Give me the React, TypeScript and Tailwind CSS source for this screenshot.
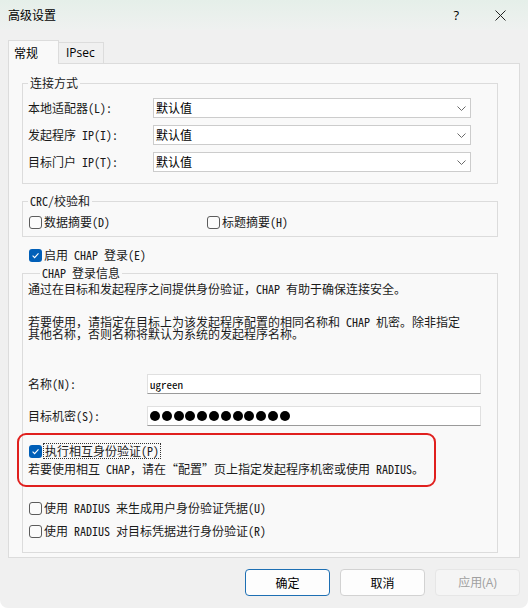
import React from "react";

const body = "font-['Noto_Sans_Mono_CJK_SC','Noto_Sans_CJK_SC',monospace]";
const ui = "font-['Segoe_UI','Open_Sans','Noto_Sans_CJK_SC',sans-serif]";

function Box({ checked }: { checked?: boolean }) {
  return checked ? (
    <span className="w-[13px] h-[13px] rounded-[3px] bg-[#005fb8] flex items-center justify-center shrink-0">
      <svg width="9" height="9" viewBox="0 0 9 9">
        <path d="M1.6 4.7 L3.6 6.6 L7.5 2.4" fill="none" stroke="white" strokeWidth="1.1" />
      </svg>
    </span>
  ) : (
    <span className="w-[13px] h-[13px] rounded-[3px] border border-[#5c5c5c] bg-[#fbfbfb] shrink-0" />
  );
}

function Combo() {
  return (
    <div className="w-[318px] h-[20px] bg-white border border-[#cccccc] flex items-center pl-[2px] pr-[4px] justify-between">
      <span className="text-[12px] leading-[14px] text-black font-['Noto_Sans_CJK_SC',sans-serif]">默认值</span>
      <svg width="9" height="5" viewBox="0 0 9 5">
        <path d="M0.5 0.5 L4.5 4.5 L8.5 0.5" fill="none" stroke="#6a6a6a" strokeWidth="1" />
      </svg>
    </div>
  );
}

function Legend({ children, ml }: { children: React.ReactNode; ml: string }) {
  return (
    <div className={`-mt-[9px] ${ml} px-[2px] w-fit bg-[#f9f9f9] leading-[16px] text-[12px] text-[#1a1a1a]`}>
      {children}
    </div>
  );
}

function ComboRow({ label }: { label: string }) {
  return (
    <div className="flex items-center h-[20px] pl-[5px]">
      <span className="w-[125px] text-[12px] leading-[14px] text-[#1a1a1a]">{label}</span>
      <Combo />
    </div>
  );
}

function CheckRow({ checked, label, cls }: { checked?: boolean; label: React.ReactNode; cls?: string }) {
  return (
    <div className={`flex items-center gap-[2px] h-[16px] ${cls ?? ""}`}>
      <Box checked={checked} />
      <span className="text-[12px] leading-[14px] text-[#1a1a1a] whitespace-nowrap">{label}</span>
    </div>
  );
}

export default function App() {
  return (
    <div className={`w-[528px] h-[608px] bg-[#f0f0f0] overflow-hidden rounded-b-[8px] ${body}`}>
      {/* title bar */}
      <div className="h-[30px] flex items-center pl-[8px] pr-[22px] bg-gradient-to-b from-[#e5efe9] to-[#eff1f0]">
        <span className="text-[12px] leading-[16px] text-black font-['Noto_Sans_CJK_SC',sans-serif]">高级设置</span>
        <span className={`ml-auto text-[13px] leading-[16px] text-black ${ui}`}>?</span>
        <svg className="ml-[36px]" width="11" height="11" viewBox="0 0 11 11">
          <path d="M0.5 0.5 L10.5 10.5 M10.5 0.5 L0.5 10.5" stroke="#222" strokeWidth="1" />
        </svg>
      </div>

      {/* tabs */}
      <div className="mt-[10px] h-[23px] flex items-end pl-[8px]">
        <div className="relative z-10 -mb-px w-[51px] h-[24px] border border-b-0 border-[#dcdcdc] bg-[#f9f9f9] pl-[5px] flex items-center">
          <span className="text-[12px] leading-[16px] text-black font-['Noto_Sans_CJK_SC',sans-serif]">常规</span>
        </div>
        <div className="w-[45px] h-[21px] border border-l-0 border-b-0 border-[#dcdcdc] bg-[#f0f0f0] pl-[7px] flex items-center">
          <span className={`text-[12px] leading-[16px] text-black ${ui}`}>IPsec</span>
        </div>
      </div>

      {/* panel */}
      <div className="mx-[8px] w-[512px] border border-[#dcdcdc] bg-[#f9f9f9] pb-[4px]">
        {/* group 1 */}
        <div className="mt-[19px] ml-[13px] w-[476px] border border-[#dcdcdc] pb-[11px]">
          <Legend ml="ml-[5px]">连接方式</Legend>
          <div className="mt-[7px] flex flex-col gap-[7px]">
            <ComboRow label="本地适配器(L):" />
            <ComboRow label="发起程序 IP(I):" />
            <ComboRow label="目标门户 IP(T):" />
          </div>
        </div>

        {/* group 2 */}
        <div className="mt-[17px] ml-[13px] w-[476px] border border-[#dcdcdc] pb-[6px]">
          <Legend ml="ml-[5px]">CRC/校验和</Legend>
          <div className="mt-[5px] pl-[6px] flex items-center">
            <div className="w-[178px]">
              <CheckRow label="数据摘要(D)" />
            </div>
            <CheckRow label="标题摘要(H)" />
          </div>
        </div>

        <CheckRow checked label="启用 CHAP 登录(E)" cls="mt-[10px] ml-[20px]" />

        {/* group 3 */}
        <div className="mt-[10px] ml-[13px] w-[476px] border border-[#dcdcdc] pb-[13px]">
          <Legend ml="ml-[17px]">CHAP 登录信息</Legend>
          <div className="mt-[1px] pl-[5px] text-[12px] leading-[14px] text-[#1a1a1a] whitespace-nowrap">
            通过在目标和发起程序之间提供身份验证，CHAP 有助于确保连接安全。
          </div>
          <div className="mt-[20px] pl-[5px] text-[12px] leading-[12px] text-[#1a1a1a] whitespace-nowrap">
            若要使用，请指定在目标上为该发起程序配置的相同名称和 CHAP 机密。除非指定
            <br />
            其他名称，否则名称将默认为系统的发起程序名称。
          </div>

          <div className="mt-[34px] flex items-center h-[20px] pl-[5px]">
            <span className="w-[119px] text-[12px] leading-[14px] text-[#1a1a1a]">名称(N):</span>
            <div className="w-[334px] h-[20px] bg-white border border-[#e0e0e0] border-b-[#9a9a9a] flex items-center pl-[2px]">
              <span className="text-[11px] leading-[14px] text-black">ugreen</span>
            </div>
          </div>
          <div className="mt-[12px] flex items-center h-[20px] pl-[5px]">
            <span className="w-[119px] text-[12px] leading-[14px] text-[#1a1a1a]">目标机密(S):</span>
            <div className="w-[334px] h-[20px] bg-white border border-[#e0e0e0] border-b-[#9a9a9a] flex items-center pl-[2px] gap-[1.8px]">
              {Array.from({ length: 12 }).map((_, i) => (
                <span key={i} className="w-[10px] h-[10px] rounded-full bg-black" />
              ))}
            </div>
          </div>

          <div className="relative mt-[17px]">
            <div className="flex items-center gap-[1px] h-[16px] pl-[6px]">
              <Box checked />
              <span className="text-[12px] leading-[14px] text-[#1a1a1a] border border-dotted border-[#333] px-[1px] whitespace-nowrap">
                执行相互身份验证(P)
              </span>
            </div>
            <div className="mt-[3px] pl-[5px] text-[12px] leading-[14px] text-[#1a1a1a] whitespace-nowrap">
              若要使用相互 CHAP，请在“配置”页上指定发起程序机密或使用 RADIUS。
            </div>
            <div className="absolute -top-[10px] -left-[6px] w-[419px] h-[54px] border-[2.5px] border-[#e0201e] rounded-[9px] pointer-events-none" />
          </div>

          <CheckRow label="使用 RADIUS 来生成用户身份验证凭据(U)" cls="mt-[24px] ml-[6px]" />
          <CheckRow label="使用 RADIUS 对目标凭据进行身份验证(R)" cls="mt-[7px] ml-[6px]" />
        </div>
      </div>

      {/* buttons */}
      <div className="mt-[11px] flex justify-end pr-[8px] gap-[10px]">
        <button className="w-[85px] h-[27px] rounded-[4px] bg-[#fdfdfd] border border-[#1d6fb3] text-[12px] text-black font-['Noto_Sans_CJK_SC',sans-serif]">
          确定
        </button>
        <button className="w-[85px] h-[27px] rounded-[4px] bg-[#fdfdfd] border border-[#d2d2d2] text-[12px] text-black font-['Noto_Sans_CJK_SC',sans-serif]">
          取消
        </button>
        <button className={`w-[85px] h-[27px] rounded-[4px] bg-[#f5f5f5] border border-[#e6e6e6] text-[12px] text-[#a0a0a0] ${ui}`}>
          应用(A)
        </button>
      </div>
    </div>
  );
}
